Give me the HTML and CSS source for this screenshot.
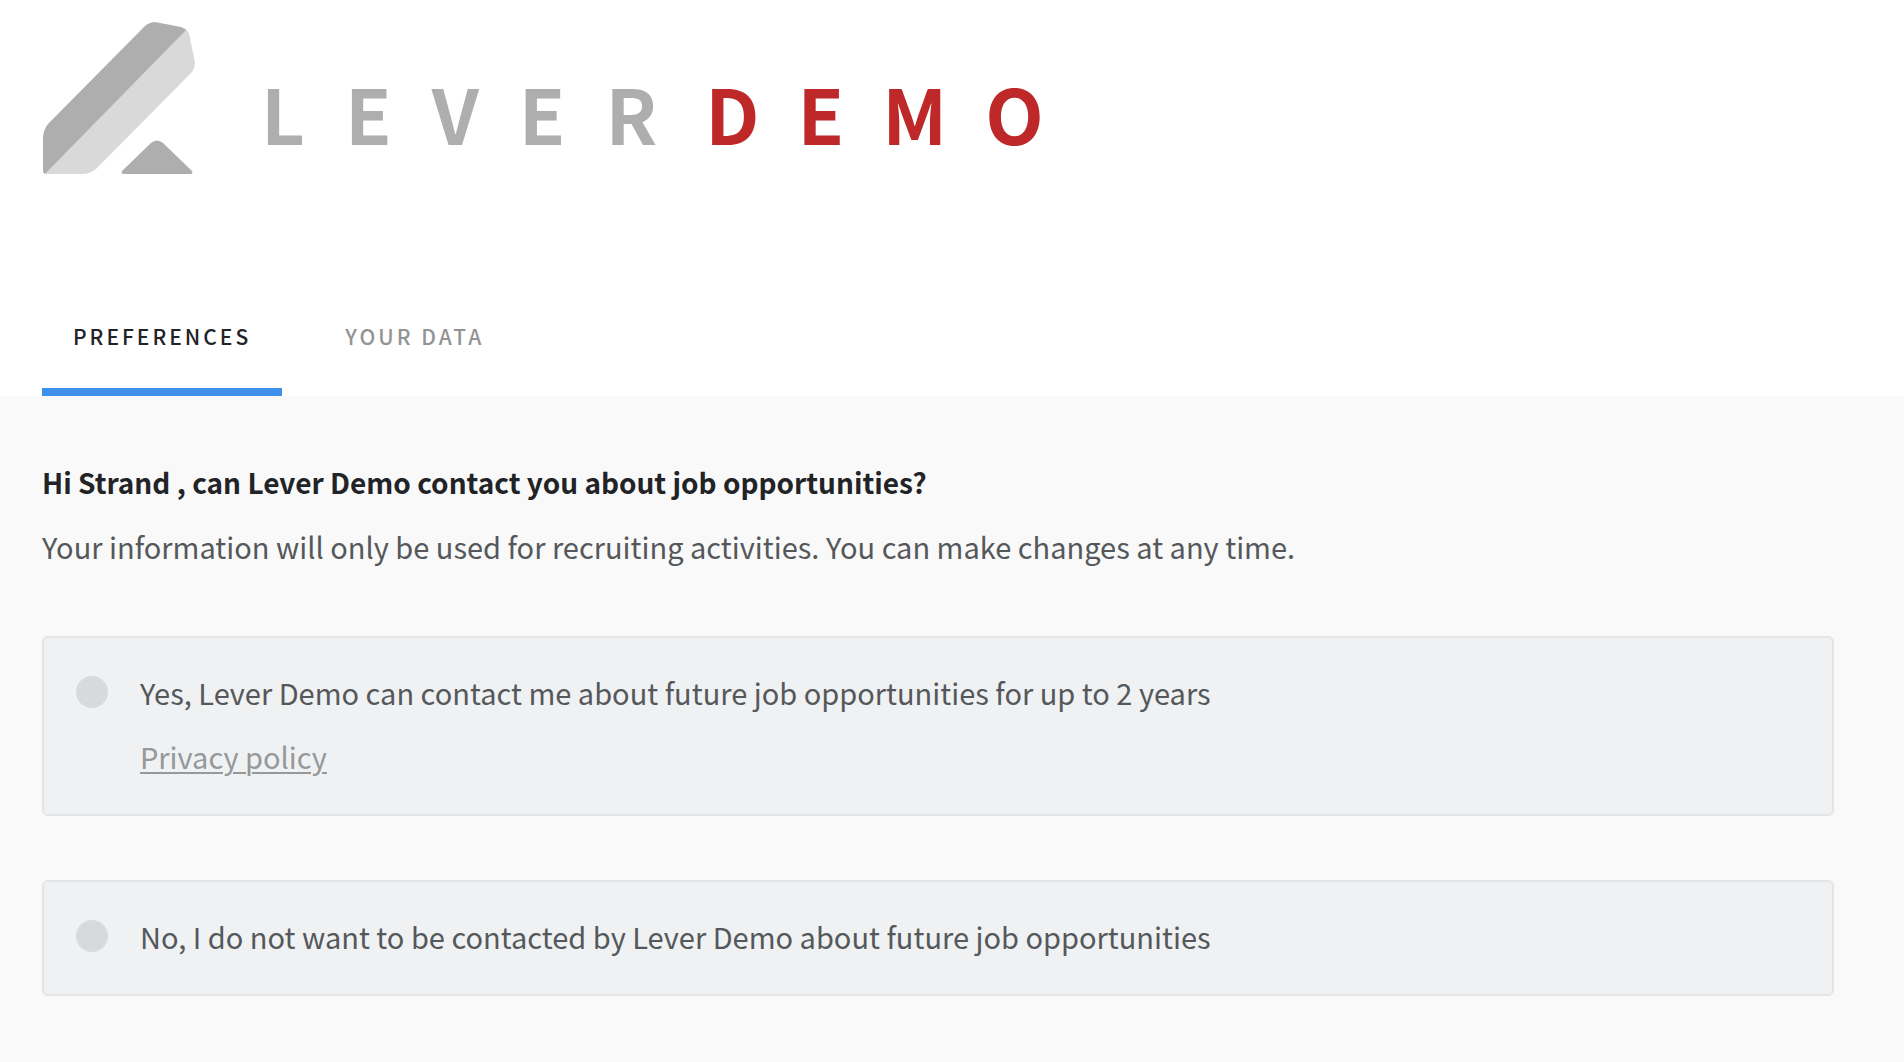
FILE: index.html
```html
<!DOCTYPE html>
<html lang="en">
<head>
    <meta charset="UTF-8">
    <meta name="viewport" content="width=device-width, initial-scale=1.0">
    <title>Lever Demo - Preferences</title>
    <link rel="stylesheet" href="styles.css">
</head>
<body>
    <header class="header">
        <div class="logo">
            <svg class="logo-mark" viewBox="-1 0 153 152" aria-hidden="true">
                <path fill="#d9d9d9" d="M143 7Q146 10 147 16L152 41Q152 46 149 50L53 147Q47 152 39 152H2Z"/>
                <path fill="#aeaeae" d="M0 117Q0 108 5 102L102 4Q107 0 112 0L138 5Q141 6 143 8L2 152Q0 151 0 149Z"/>
                <path fill="#aeaeae" d="M80 152Q77 151 80 148L108 121Q114 116 120 121L148 148Q151 151 148 152Z"/>
            </svg>
            <div class="logo-name">LEVER<span class="logo-demo">DEMO</span></div>
        </div>
        <nav class="tabs">
            <a class="tab active" href="#preferences">PREFERENCES</a>
            <a class="tab" href="#data">YOUR DATA</a>
        </nav>
    </header>

    <main class="content">
        <h1>Hi Strand , can Lever Demo contact you about job opportunities?</h1>
        <p class="intro">Your information will only be used for recruiting activities. You can make changes at any time.</p>
        <form class="options">
            <div class="option">
                <input type="radio" id="consent-yes" name="consent" value="yes">
                <div class="option-text">
                    <label for="consent-yes">Yes, Lever Demo can contact me about future job opportunities for up to 2 years</label>
                    <a class="policy" href="#privacy">Privacy policy</a>
                </div>
            </div>
            <div class="option">
                <input type="radio" id="consent-no" name="consent" value="no">
                <div class="option-text">
                    <label for="consent-no">No, I do not want to be contacted by Lever Demo about future job opportunities</label>
                </div>
            </div>
        </form>
    </main>
</body>
</html>
```
FILE: styles.css
```css
* {
    box-sizing: border-box;
}
body {
    margin: 0;
    min-height: 100vh;
    background: #f9f9f9;
    color: #55585b;
    font-family: "Noto Sans CJK SC", "Noto Sans", sans-serif;
    font-size: 29px;
    line-height: 64px;
}
.header {
    background: #fff;
    padding: 22px 42px 0;
}
.logo {
    display: flex;
    align-items: flex-end;
    gap: 66px;
    margin-bottom: 96px;
}
.logo-mark {
    width: 153px;
    height: 152px;
    flex-shrink: 0;
}
.logo-name {
    color: #aeaeae;
    font-size: 76px;
    font-weight: 700;
    line-height: 124px;
    letter-spacing: 40px;
    white-space: nowrap;
}
.logo-demo {
    margin-left: 8px;
    color: #be2828;
    letter-spacing: 38px;
}
.tabs {
    display: flex;
    gap: 32px;
}
.tab {
    padding: 34px 31px 20px;
    border-bottom: 8px solid transparent;
    color: #929394;
    font-size: 21px;
    font-weight: 500;
    letter-spacing: 3px;
    text-decoration: none;
}
.tab.active {
    border-bottom-color: #3e90ea;
    color: #212327;
}
.content {
    padding: 54px 70px 64px 42px;
}
h1 {
    margin: 0;
    color: #212327;
    font-size: 28px;
    font-weight: 700;
}
.intro {
    margin: 0 0 58px;
}
.options {
    display: flex;
    flex-direction: column;
    gap: 64px;
}
.option {
    display: flex;
    align-items: flex-start;
    gap: 32px;
    padding: 22px 32px 26px;
    background: #eff1f3;
    border: 2px solid #e2e4e6;
    border-radius: 6px;
}
.option input {
    appearance: none;
    flex-shrink: 0;
    width: 32px;
    height: 32px;
    margin: 16px 0 0;
    border-radius: 50%;
    background: #d7d9db;
    cursor: pointer;
}
.option input:checked {
    background: #3e90ea;
}
.option-text {
    display: flex;
    flex-direction: column;
    align-items: flex-start;
}
.policy {
    color: #969899;
    text-decoration-thickness: 2px;
    text-underline-offset: 3px;
}
```
